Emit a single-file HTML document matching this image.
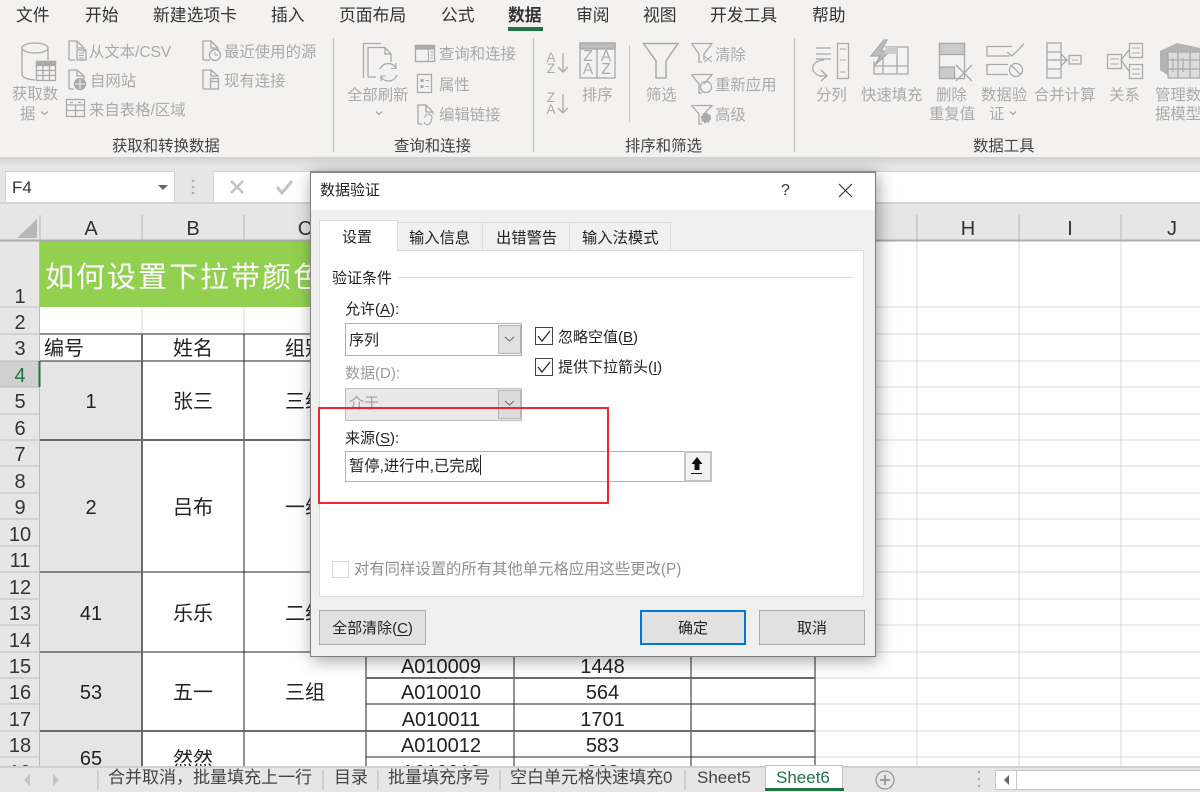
<!DOCTYPE html>
<html lang="zh-CN">
<head>
<meta charset="utf-8">
<title>数据验证</title>
<style>
html,body{margin:0;padding:0;background:#fff}
body{width:1200px;height:792px;position:relative;overflow:hidden;font-family:"Liberation Sans","Noto Sans CJK SC",sans-serif;color:#222}
.t{position:absolute;white-space:nowrap;line-height:20px;height:20px;margin-top:1px}
.c{text-align:center}
.abs{position:absolute}
.tab{font-size:16.8px;top:5px;color:#333}
.r{font-size:15.4px;color:#aaa}
.sec{font-size:15.4px;color:#444;top:136px}
.rn{left:0;width:40px;text-align:center;font-size:20px;color:#333}
.cell{font-size:20px;color:#222;text-align:center}
.bt{font-size:17px;color:#444;top:767px}
.d{font-size:15px;color:#222}
.l{width:16px;text-align:center;line-height:14px;color:#aaa;font-size:13.500px}
.b{font-size:15.500px}
svg{position:absolute;left:0;top:0}
u{text-decoration:underline;text-underline-offset:2px}
</style>
</head>
<body>

<!-- formula bar zone -->
<div class="abs" style="left:0;top:157px;width:1200px;height:84px;background:#e6e6e6"></div>
<div class="abs" style="left:0;top:157px;width:1200px;height:9px;background:linear-gradient(#d2d2d2,#e6e6e6)"></div>
<div class="abs" style="left:5px;top:171px;width:168px;height:30px;background:#fff;border:1px solid #d0d0d0"></div>
<div class="abs" style="left:213px;top:171px;width:987px;height:30px;background:#fff;border:1px solid #d8d8d8;border-right:0"></div>
<div class="abs" style="left:0;top:202px;width:1200px;height:2px;background:#d4d4d4"></div>
<div class="t" style="left:12px;top:177px;font-size:17px;color:#333">F4</div>

<!-- sheet -->
<div class="abs" style="left:0;top:0;width:1200px;height:766px;overflow:hidden">
  <div class="abs" style="left:40px;top:241px;width:326px;height:66px;background:#92d050"></div>
  <div class="abs" style="left:40px;top:361px;width:102px;height:405px;background:#e5e5e5"></div>
  <div class="abs" style="left:0;top:361px;width:40px;height:26px;background:#d0d0d0"></div>
  <div class="abs" style="left:0;top:241px;width:40px;height:120px;background:#e6e6e6"></div>
  <div class="abs" style="left:0;top:387px;width:40px;height:379px;background:#e6e6e6"></div>

  <svg width="1200" height="766" shape-rendering="crispEdges" fill="none">
    <!-- light grid -->
    <g stroke="#d9d9d9" stroke-width="1">
      <path d="M815 307H1200M815 334H1200M815 361H1200M815 387H1200M815 414H1200M815 440H1200M815 466H1200M815 493H1200M815 519H1200M815 546H1200M815 572H1200M815 599H1200M815 625H1200M815 652H1200M815 678H1200M815 704H1200M815 731H1200M815 757H1200"/>
      <path d="M917 241V766M1019 241V766M1121 241V766"/>
      <path d="M142 307V334M244 307V334"/>
    </g>
    <!-- row header separators -->
    <g stroke="#bdbdbd" stroke-width="1">
      <path d="M0 307H40M0 334H40M0 361H40M0 387H40M0 414H40M0 440H40M0 466H40M0 493H40M0 519H40M0 546H40M0 572H40M0 599H40M0 625H40M0 652H40M0 678H40M0 704H40M0 731H40M0 757H40"/>
      <path d="M39.5 241V766"/>
    </g>
    <path d="M39.5 361V387" stroke="#217346" stroke-width="2"/>
    <!-- table borders -->
    <g stroke="#262626" stroke-width="1">
      <path d="M40 334H366M40 361H366M40 572H366M40 652H366"/>
      <path d="M244 334V766M366 334V766M514 656V766M691 656V766M815 656V766"/>
      <path d="M366 704H815M366 757H815"/>
    </g>
    <g stroke="#6a6a6a" stroke-width="2">
      <path d="M40 440H366M40 731H815"/>
      <path d="M142 334V766"/>
      <path d="M366 678H815"/>
    </g>
    <!-- column header -->
    <g stroke="#b5b5b5" stroke-width="1">
      <path d="M40 215V241M142 215V241M244 215V241M366 215V241M514 215V241M691 215V241M815 215V241M917 215V241M1019 215V241M1121 215V241"/>
    </g>
    <path d="M0 240.5H1200" stroke="#ababab" stroke-width="2"/>
    <polygon points="37,219 37,238 17,238" fill="#b7b7b7"/>
  </svg>

  <div class="t" style="left:45px;top:262px;height:30px;line-height:30px;font-size:29px;letter-spacing:2px;color:#fff">如何设置下拉带颜色</div>

  <div class="t c" style="left:40px;width:102px;top:218px;font-size:20px;color:#333">A</div>
  <div class="t c" style="left:142px;width:102px;top:218px;font-size:20px;color:#333">B</div>
  <div class="t c" style="left:244px;width:122px;top:218px;font-size:20px;color:#333">C</div>
  <div class="t c" style="left:917px;width:102px;top:218px;font-size:20px;color:#333">H</div>
  <div class="t c" style="left:1019px;width:102px;top:218px;font-size:20px;color:#333">I</div>
  <div class="t c" style="left:1121px;width:102px;top:218px;font-size:20px;color:#333">J</div>

  <div class="t rn" style="top:286px">1</div>
  <div class="t rn" style="top:312px">2</div>
  <div class="t rn" style="top:338px">3</div>
  <div class="t rn" style="top:365px;color:#217346">4</div>
  <div class="t rn" style="top:391px">5</div>
  <div class="t rn" style="top:418px">6</div>
  <div class="t rn" style="top:444px">7</div>
  <div class="t rn" style="top:471px">8</div>
  <div class="t rn" style="top:497px">9</div>
  <div class="t rn" style="top:524px">10</div>
  <div class="t rn" style="top:550px">11</div>
  <div class="t rn" style="top:577px">12</div>
  <div class="t rn" style="top:603px">13</div>
  <div class="t rn" style="top:630px">14</div>
  <div class="t rn" style="top:656px">15</div>
  <div class="t rn" style="top:682px">16</div>
  <div class="t rn" style="top:709px">17</div>
  <div class="t rn" style="top:735px">18</div>
  <div class="t rn" style="top:762px">19</div>

  <div class="t cell" style="left:44px;top:338px;text-align:left">编号</div>
  <div class="t cell" style="left:142px;width:102px;top:338px">姓名</div>
  <div class="t cell" style="left:244px;width:122px;top:338px">组别</div>

  <div class="t cell" style="left:40px;width:102px;top:391px">1</div>
  <div class="t cell" style="left:142px;width:102px;top:391px">张三</div>
  <div class="t cell" style="left:244px;width:122px;top:391px">三组</div>
  <div class="t cell" style="left:40px;width:102px;top:497px">2</div>
  <div class="t cell" style="left:142px;width:102px;top:497px">吕布</div>
  <div class="t cell" style="left:244px;width:122px;top:497px">一组</div>
  <div class="t cell" style="left:40px;width:102px;top:603px">41</div>
  <div class="t cell" style="left:142px;width:102px;top:603px">乐乐</div>
  <div class="t cell" style="left:244px;width:122px;top:603px">二组</div>
  <div class="t cell" style="left:40px;width:102px;top:682px">53</div>
  <div class="t cell" style="left:142px;width:102px;top:682px">五一</div>
  <div class="t cell" style="left:244px;width:122px;top:682px">三组</div>
  <div class="t cell" style="left:40px;width:102px;top:748px">65</div>
  <div class="t cell" style="left:142px;width:102px;top:749px">然然</div>

  <div class="t cell" style="left:367px;width:148px;top:656px">A010009</div>
  <div class="t cell" style="left:514px;width:177px;top:656px">1448</div>
  <div class="t cell" style="left:367px;width:148px;top:682px">A010010</div>
  <div class="t cell" style="left:514px;width:177px;top:682px">564</div>
  <div class="t cell" style="left:367px;width:148px;top:709px">A010011</div>
  <div class="t cell" style="left:514px;width:177px;top:709px">1701</div>
  <div class="t cell" style="left:367px;width:148px;top:735px">A010012</div>
  <div class="t cell" style="left:514px;width:177px;top:735px">583</div>
  <div class="t cell" style="left:367px;width:148px;top:762px">A010013</div>
  <div class="t cell" style="left:514px;width:177px;top:762px">968</div>
</div>

<!-- ribbon -->
<div class="abs" style="left:0;top:0;width:1200px;height:157px;background:#f3f2f1"></div>
<div class="t tab" style="left:16px">文件</div>
<div class="t tab" style="left:85px">开始</div>
<div class="t tab" style="left:153px">新建选项卡</div>
<div class="t tab" style="left:271px">插入</div>
<div class="t tab" style="left:339px">页面布局</div>
<div class="t tab" style="left:441px">公式</div>
<div class="t tab" style="left:508px;font-weight:700">数据</div>
<div class="abs" style="left:508px;top:27px;width:35px;height:4px;background:#217346"></div>
<div class="t tab" style="left:576px">审阅</div>
<div class="t tab" style="left:643px">视图</div>
<div class="t tab" style="left:710px">开发工具</div>
<div class="t tab" style="left:812px">帮助</div>

<div class="t r" style="left:89px;top:42px">从文本/CSV</div>
<div class="t r" style="left:90px;top:71px">自网站</div>
<div class="t r" style="left:89px;top:100px">来自表格/区域</div>
<div class="t r" style="left:224px;top:42px">最近使用的源</div>
<div class="t r" style="left:224px;top:71px">现有连接</div>
<div class="t r" style="left:12px;top:84px">获取数</div>
<div class="t r" style="left:20px;top:104px">据</div>
<div class="t r" style="left:347px;top:85px">全部刷新</div>
<div class="t r" style="left:439px;top:44px">查询和连接</div>
<div class="t r" style="left:439px;top:75px">属性</div>
<div class="t r" style="left:439px;top:105px">编辑链接</div>
<div class="t r" style="left:582px;top:85px">排序</div>
<div class="t r" style="left:646px;top:85px">筛选</div>
<div class="t r" style="left:715px;top:45px">清除</div>
<div class="t r" style="left:715px;top:75px">重新应用</div>
<div class="t r" style="left:715px;top:105px">高级</div>
<div class="t r" style="left:816px;top:85px">分列</div>
<div class="t r" style="left:861px;top:85px">快速填充</div>
<div class="t r" style="left:936px;top:85px">删除</div>
<div class="t r" style="left:929px;top:104px">重复值</div>
<div class="t r" style="left:981px;top:85px">数据验</div>
<div class="t r" style="left:989px;top:104px">证</div>
<div class="t r" style="left:1034px;top:85px">合并计算</div>
<div class="t r" style="left:1109px;top:85px">关系</div>
<div class="t r" style="left:1155px;top:85px">管理数</div>
<div class="t r" style="left:1155px;top:104px">据模型</div>

<div class="t sec" style="left:112px">获取和转换数据</div>
<div class="t sec" style="left:394px">查询和连接</div>
<div class="t sec" style="left:625px">排序和筛选</div>
<div class="t sec" style="left:973px">数据工具</div>

<!-- ribbon letters for sort icons -->
<div class="t l" style="left:543px;top:50px">A</div>
<div class="t l" style="left:543px;top:61px">Z</div>
<div class="t l" style="left:543px;top:90px">Z</div>
<div class="t l" style="left:543px;top:102px">A</div>
<div class="t l b" style="left:580px;top:49px">Z</div>
<div class="t l b" style="left:598px;top:49px">A</div>
<div class="t l b" style="left:580px;top:62px">A</div>
<div class="t l b" style="left:598px;top:62px">Z</div>

<!-- ribbon icons -->
<svg width="1200" height="157" fill="none" stroke="#a9a9a9" stroke-width="1.3">
  <g stroke="#c8c8c8" stroke-width="1.5"><path d="M333.5 38V152M533.5 38V152M794.5 38V152"/><path d="M629.5 45V122" stroke-width="1"/></g>
  <!-- database -->
  <ellipse cx="35" cy="48" rx="13" ry="5"/>
  <path d="M22 48V74Q22 79 35 80M48 48V60"/>
  <rect x="36.5" y="61.5" width="19" height="19" fill="#f3f2f1"/>
  <rect x="36.5" y="61.5" width="19" height="4" fill="#a9a9a9"/>
  <path d="M36.5 70.5H55.5M36.5 75.5H55.5M43 65V80.5M49.5 65V80.5"/>
  <!-- from text -->
  <path d="M69 60V41H77L84 48V52M77 41V48H84M69 60H75"/>
  <rect x="77" y="50" width="9" height="10"/><path d="M79 53H84M79 55.500H84M79 58H84" stroke-width="1"/>
  <!-- web -->
  <path d="M69 89V70H77L84 76V79M77 70V76H84M69 89H74"/>
  <circle cx="80" cy="84" r="5.500" fill="#a9a9a9"/><path d="M75 84H85M80 79V89" stroke="#f3f2f1" stroke-width="1"/>
  <!-- table range -->
  <rect x="66.500" y="99.500" width="18" height="17"/>
  <path d="M66.500 105H84.500M66.500 110.500H84.500M75.500 105V116.500M70 102.500H73M78 102.500H81"/>
  <!-- recent -->
  <path d="M203 60V41H211L218 48V50M211 41V48H218M203 60H210"/>
  <circle cx="215" cy="55" r="5.500"/><path d="M215 52V55H218" stroke-width="1"/>
  <!-- existing -->
  <path d="M203 89V70H211L218 76V77M211 70V76H218M203 89H210"/>
  <rect x="210.500" y="78.500" width="8" height="10.500"/><path d="M210.500 81.500H218.500"/>
  <!-- chevrons -->
  <path d="M41 111.500L44.500 114.500L48 111.500M376 111.500L379 114.500L382 111.500M1010 111.500L1013 114.500L1016 111.500"/>
  <!-- refresh all -->
  <path d="M363.500 78V43.500H381"/>
  <path d="M368 77V47.500H385L391 54V62M385 47.500V54H391M368 77H376"/>
  <path d="M380 69A9 9 0 0 1 396 68M397 75A9 9 0 0 1 381 77"/>
  <path d="M396 63V68.500H391M381 81V76H386" stroke-width="1.100"/>
  <!-- queries pane -->
  <rect x="415.500" y="45.500" width="19" height="16"/>
  <rect x="415.500" y="45.500" width="19" height="3.500" fill="#a9a9a9"/>
  <path d="M428.500 49V61.500M430.500 52H433M430.500 55H433M430.500 58H433" stroke-width="1"/>
  <!-- properties -->
  <rect x="417.500" y="74.500" width="14" height="18"/>
  <path d="M420.500 79H423.500V82H420.500ZM420.500 85H423.500V88H420.500Z" fill="#a9a9a9" stroke="none"/>
  <path d="M425.500 80.500H429M425.500 86.500H429" stroke-width="1"/>
  <!-- edit links -->
  <path d="M418 124V105H426L433 112V114M426 105V112H433M418 124H422"/>
  <path d="M425 118A3.500 3.500 0 1 1 431 120A3 3 0 0 1 424 122" stroke-width="1.100"/>
  <!-- sort arrows -->
  <path d="M563 53V72M558 67L563 72L568 67M563 94V113M558 108L563 113L568 108"/>
  <!-- sort box -->
  <rect x="580" y="43" width="35" height="35"/>
  <rect x="580" y="43" width="35" height="6" fill="#bcbcbc"/>
  <path d="M597 49V78"/>
  <!-- funnel -->
  <path d="M643.500 43.500H678L666 61V78H656V61Z" stroke-width="1.500"/>
  <!-- clear filter -->
  <path d="M691.500 43.500H712L704 54V60M691.500 43.500L699 54V62H702" stroke-width="1.300"/>
  <path d="M704 56L712 62M712 56L704 62" stroke-width="1"/>
  <!-- reapply -->
  <path d="M691.500 74.500H712L704 84M691.500 74.500L699 84V93H702"/>
  <circle cx="706" cy="87" r="5.500" stroke-width="1.200"/>
  <!-- advanced -->
  <path d="M691.500 105.500H712L704 114M691.500 105.500L699 114V124H702"/>
  <circle cx="706" cy="118" r="4.500" fill="#a9a9a9" stroke-dasharray="2 1.500" stroke-width="1.500"/>
  <!-- text to columns -->
  <path d="M816 48H831M816 54H831M816 59H831"/>
  <rect x="837.500" y="43.500" width="11" height="35"/>
  <path d="M840 49H846M840 60H846M840 72H846" stroke-width="1"/>
  <path d="M824 60C812 60 808 72 820 76H826M821 70L827 76L821 81"/>
  <!-- flash fill -->
  <path d="M874 61V74H908V47H885"/>
  <path d="M874 66H908M883 54V74M897 47V74"/>
  <path d="M884 40L871 56H880L875 65L890 51H881L887 40Z" fill="#bdbdbd" stroke="#a9a9a9"/>
  <path d="M886 47H897V54H884Z" fill="#ccc" stroke="none"/>
  <!-- remove dup -->
  <rect x="939.500" y="43.500" width="25" height="35"/>
  <rect x="939.500" y="43.500" width="25" height="11" fill="#cbcbcb"/>
  <rect x="939.500" y="67" width="15" height="11.500" fill="#cbcbcb"/>
  <path d="M956 65L972 81M972 65L956 81" stroke-width="1.400"/>
  <!-- validation -->
  <path d="M1012 46.500H987V56H1010M1007 52L1012 56L1024 44"/>
  <path d="M1008 64.500H987V74.500H1008"/>
  <circle cx="1016" cy="70" r="6.500"/><path d="M1011.500 65.500L1020.500 74.500"/>
  <!-- consolidate -->
  <rect x="1047" y="43" width="14" height="35"/>
  <path d="M1047 52H1061M1047 60H1061M1047 69H1061"/>
  <path d="M1052 60H1066M1061 54L1067 60L1061 66"/>
  <rect x="1069" y="55.500" width="12" height="8.500"/><path d="M1072 60H1078" stroke-width="1"/>
  <!-- relations -->
  <rect x="1107.500" y="54.500" width="14" height="14"/>
  <rect x="1129.500" y="43.500" width="13" height="14"/>
  <rect x="1129.500" y="64.500" width="13" height="14"/>
  <path d="M1110 59H1119M1110 64H1119M1132 48H1140M1132 53H1140M1132 69H1140M1132 74H1140" stroke-width="1"/>
  <path d="M1129 50L1121 60L1129 71"/>
  <!-- data model -->
  <path d="M1160 51L1177 43L1200 48V78H1172L1160 70Z" fill="#b4b4b4" stroke="none"/>
  <path d="M1168 52H1200V78H1168Z" fill="#dcdcdc" stroke="#a9a9a9"/>
  <path d="M1178 52V78M1190 52V78M1168 60H1200M1168 69H1200"/>
  <path d="M1173 58V72M1183 58V72" stroke-width="1.200"/>
</svg>

<!-- name box + formula icons -->
<svg width="1200" height="240" fill="none" stroke="#aaa" style="pointer-events:none">
  <polygon points="158,185 168,185 163,190" fill="#666" stroke="none"/>
  <path d="M193 180V182M193 186V188M193 192V194" stroke-width="2.500"/>
  <path d="M231 181L243 193M243 181L231 193" stroke-width="2.400" stroke="#c2c2c2"/>
  <path d="M277 187L282 193L292 181" stroke-width="3" stroke="#c2c2c2"/>
</svg>

<!-- bottom tabs -->
<div class="abs" style="left:0;top:766px;width:1200px;height:26px;background:#e6e6e6;border-top:2px solid #cfcfcf;box-sizing:border-box"></div>
<div class="abs" style="left:765px;top:765px;width:78px;height:25px;background:#fff;border:1px solid #c0c0c0;border-bottom:0;box-sizing:border-box"></div>
<div class="abs" style="left:765px;top:788px;width:79px;height:3px;background:#217346"></div>
<div class="t bt" style="left:108px">合并取消，批量填充上一行</div>
<div class="t bt" style="left:334px">目录</div>
<div class="t bt" style="left:388px">批量填充序号</div>
<div class="t bt" style="left:510px">空白单元格快速填充0</div>
<div class="t bt" style="left:697px">Sheet5</div>
<div class="t bt" style="left:776px;color:#217346">Sheet6</div>
<svg width="1200" height="792" fill="none" stroke="#b8b8b8" style="pointer-events:none">
  <path d="M98 770V790M323 770V790M378 770V790M500 770V790M685 770V790"/>
  <polygon points="30,774 24,780 30,786" fill="#c4c4c4" stroke="none"/>
  <polygon points="53,774 59,780 53,786" fill="#c4c4c4" stroke="none"/>
  <circle cx="885" cy="780" r="9" stroke="#999" stroke-width="1.300"/>
  <path d="M880 780H890M885 775V785" stroke="#888" stroke-width="1.500"/>
  <path d="M979 771V773M979 778V780M979 785V787" stroke="#aaa" stroke-width="2.200"/>
  <rect x="995.500" y="770.500" width="210" height="19" fill="#fff" stroke="#c6c6c6"/>
  <path d="M1016.500 771V790" stroke="#c6c6c6"/>
  <polygon points="1009,775 1004,780 1009,785" fill="#666" stroke="none"/>
</svg>

<!-- dialog -->
<div class="abs" style="left:310px;top:171px;width:566px;height:486px;box-sizing:border-box;background:#f0f0f0;border:1px solid #7d7d7d;border-top:2px solid #8a8a8a;box-shadow:2px 3px 16px rgba(0,0,0,.38)">
  <div class="abs" style="left:0;top:0;width:564px;height:37px;background:#fff"></div>
</div>
<div class="t d" style="left:320px;top:180px">数据验证</div>
<div class="t" style="left:781px;top:180px;font-size:16px;color:#333">?</div>
<svg width="1200" height="792" fill="none" style="pointer-events:none">
  <path d="M839 184L852 197M852 184L839 197" stroke="#333" stroke-width="1.100"/>
</svg>

<!-- tabs -->
<div class="abs" style="left:319px;top:250px;width:545px;height:347px;box-sizing:border-box;background:#fff;border:1px solid #dcdcdc"></div>
<div class="abs" style="left:397px;top:222px;width:86px;height:28px;box-sizing:border-box;background:#f0f0f0;border:1px solid #dcdcdc;border-bottom:0"></div>
<div class="abs" style="left:482px;top:222px;width:88px;height:28px;box-sizing:border-box;background:#f0f0f0;border:1px solid #dcdcdc;border-bottom:0"></div>
<div class="abs" style="left:569px;top:222px;width:102px;height:28px;box-sizing:border-box;background:#f0f0f0;border:1px solid #dcdcdc;border-bottom:0"></div>
<div class="abs" style="left:319px;top:220px;width:79px;height:32px;box-sizing:border-box;background:#fff;border:1px solid #dcdcdc;border-bottom:0"></div>
<div class="t d" style="left:342px;top:227px">设置</div>
<div class="t d" style="left:409px;top:228px;font-size:15.300px">输入信息</div>
<div class="t d" style="left:496px;top:228px;font-size:15.300px">出错警告</div>
<div class="t d" style="left:582px;top:228px;font-size:15.300px">输入法模式</div>

<div class="t d" style="left:332px;top:268px">验证条件</div>
<div class="abs" style="left:398px;top:277px;width:455px;height:1px;background:#dcdcdc"></div>
<div class="t d" style="left:345px;top:299px">允许(<u>A</u>):</div>

<div class="abs" style="left:345px;top:323px;width:177px;height:33px;box-sizing:border-box;background:#fff;border:1px solid #b0b0b0"></div>
<div class="abs" style="left:498px;top:325px;width:23px;height:29px;box-sizing:border-box;background:#e1e1e1;border:1px solid #b4b4b4"></div>
<div class="t d" style="left:349px;top:330px">序列</div>

<div class="t d" style="left:345px;top:363px;color:#9a9a9a">数据(D):</div>
<div class="abs" style="left:345px;top:388px;width:177px;height:33px;box-sizing:border-box;background:#e9e9e9;border:1px solid #bcbcbc"></div>
<div class="abs" style="left:498px;top:390px;width:23px;height:29px;box-sizing:border-box;background:#dcdcdc;border:1px solid #b4b4b4"></div>
<div class="t d" style="left:349px;top:393px;color:#a0a0a0">介于</div>

<div class="abs" style="left:535px;top:327px;width:18px;height:18px;box-sizing:border-box;background:#fff;border:1px solid #444"></div>
<div class="abs" style="left:535px;top:358px;width:18px;height:18px;box-sizing:border-box;background:#fff;border:1px solid #444"></div>
<div class="t d" style="left:558px;top:327px">忽略空值(<u>B</u>)</div>
<div class="t d" style="left:558px;top:357px">提供下拉箭头(<u>I</u>)</div>
<svg width="1200" height="792" fill="none" style="pointer-events:none">
  <path d="M538 336L542 341L550 331M538 367L542 372L550 362" stroke="#333" stroke-width="1.400"/>
  <path d="M505 337L509.500 341L514 337M505 401L509.500 405L514 401" stroke="#666" stroke-width="1"/>
</svg>

<div class="t d" style="left:345px;top:428px">来源(<u>S</u>):</div>
<div class="abs" style="left:345px;top:451px;width:340px;height:31px;box-sizing:border-box;background:#fff;border:1px solid #b4b4b4"></div>
<div class="abs" style="left:684px;top:451px;width:28px;height:31px;box-sizing:border-box;background:#f2f2f2;border:2px solid #c4c4c4"></div>
<div class="t" style="left:349px;top:456px;font-size:15.300px;color:#222">暂停,进行中,已完成</div>
<div class="abs" style="left:480px;top:455px;width:1px;height:20px;background:#222"></div>
<svg width="1200" height="792" style="pointer-events:none">
  <path d="M697 457L702.500 464H699.500V470H694.500V464H691.500Z" fill="#111"/>
  <path d="M691 473.500H702" stroke="#111" stroke-width="1" fill="none"/>
</svg>

<div class="abs" style="left:332px;top:561px;width:17px;height:17px;box-sizing:border-box;background:#fff;border:1px solid #d6d6d6"></div>
<div class="t d" style="left:354px;top:559px;color:#8f8f8f;font-size:15.350px">对有同样设置的所有其他单元格应用这些更改(P)</div>

<!-- buttons -->
<div class="abs" style="left:319px;top:610px;width:107px;height:35px;box-sizing:border-box;background:#e1e1e1;border:1px solid #adadad"></div>
<div class="t d" style="left:319px;width:107px;top:618px;text-align:center">全部清除(<u>C</u>)</div>
<div class="abs" style="left:640px;top:610px;width:106px;height:35px;box-sizing:border-box;background:#e1e1e1;border:2px solid #0078d7"></div>
<div class="t d" style="left:640px;width:106px;top:618px;text-align:center">确定</div>
<div class="abs" style="left:759px;top:610px;width:106px;height:35px;box-sizing:border-box;background:#e1e1e1;border:1px solid #adadad"></div>
<div class="t d" style="left:759px;width:106px;top:618px;text-align:center">取消</div>

<!-- red highlight -->
<div class="abs" style="left:318px;top:407px;width:291px;height:97px;box-sizing:border-box;border:2px solid #f0262c"></div>

</body>
</html>
